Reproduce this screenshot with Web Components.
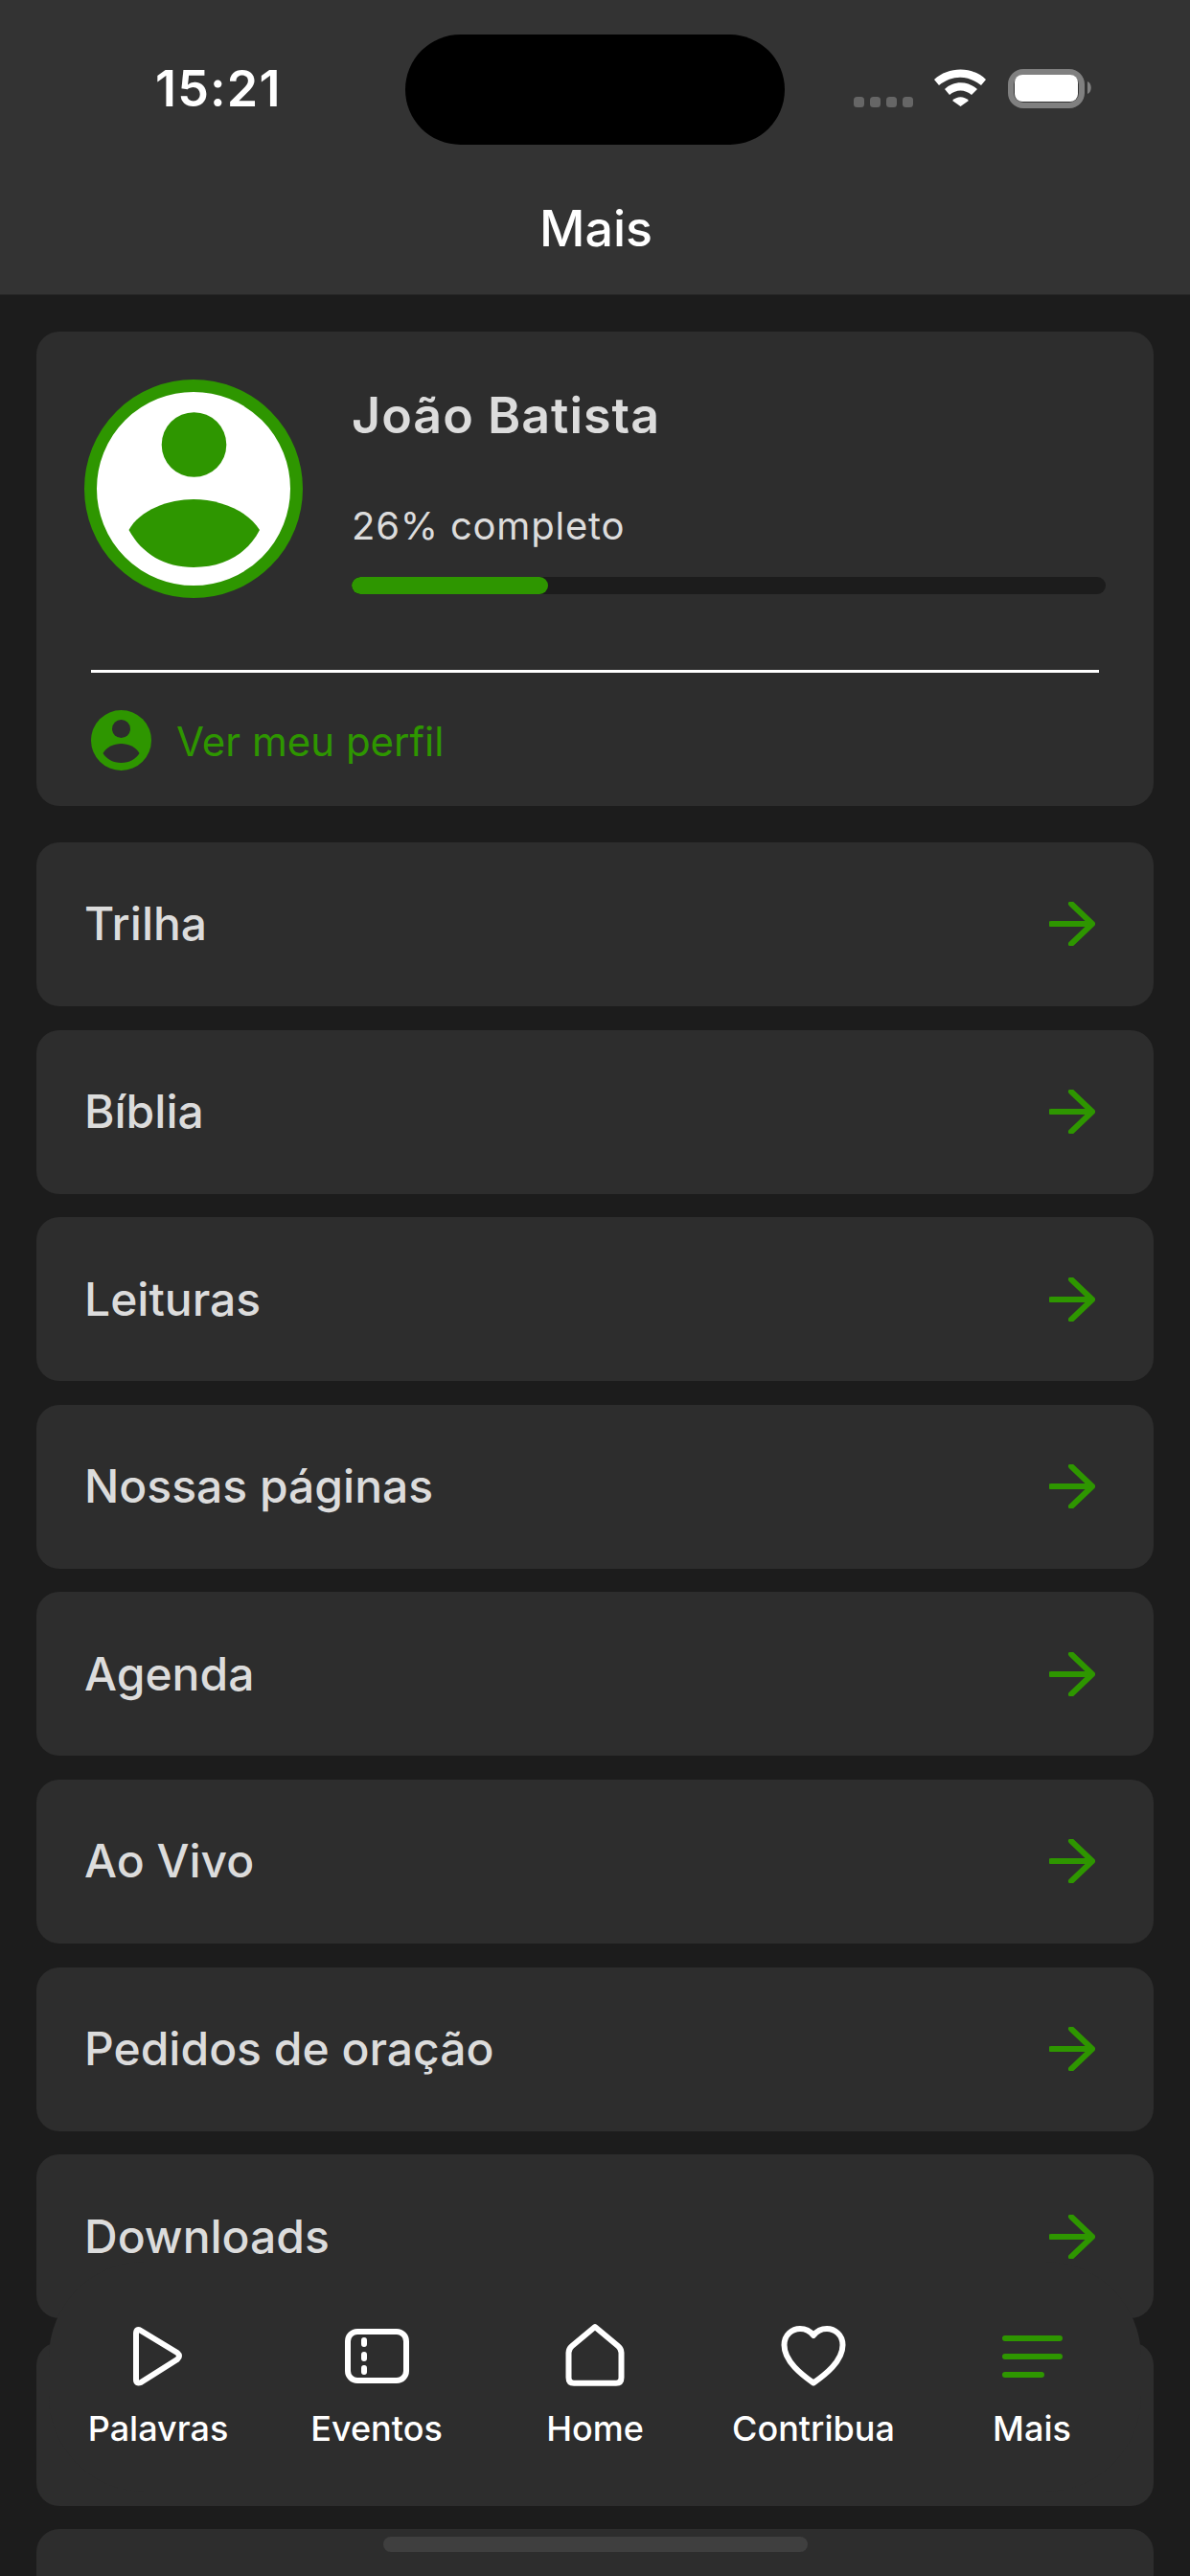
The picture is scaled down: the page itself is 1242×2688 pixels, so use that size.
<!doctype html>
<html><head><meta charset="utf-8"><style>
html,body{margin:0;padding:0;background:#1c1c1c;}
body{width:1242px;height:2688px;overflow:hidden;position:relative;font-family:Inter,"Noto Sans",sans-serif;}
</style></head><body>
<app-screen>
<top-bar slot="head" time="15:21" title="Mais"></top-bar>
<profile-card name="João Batista" percent="26" link="Ver meu perfil"></profile-card>
<menu-row>Trilha</menu-row>
<menu-row>Bíblia</menu-row>
<menu-row>Leituras</menu-row>
<menu-row>Nossas páginas</menu-row>
<menu-row>Agenda</menu-row>
<menu-row>Ao Vivo</menu-row>
<menu-row>Pedidos de oração</menu-row>
<menu-row>Downloads</menu-row>
<menu-row></menu-row>
<menu-row></menu-row>
<tab-bar slot="over"></tab-bar>
</app-screen>
<script>
const GREEN='#2e9600';
class AppScreen extends HTMLElement{constructor(){super();this.attachShadow({mode:'open'}).innerHTML=`<style>
:host{display:flex;flex-direction:column;width:1242px;height:2688px;overflow:hidden;position:relative}
main{flex:none;display:flex;flex-direction:column;gap:24.6px;padding:38px 38px 0}
.home{position:absolute;left:400px;top:2647px;width:443px;height:16px;border-radius:8px;background:#3f3f3f}
</style><slot name="head"></slot><main><slot></slot></main><slot name="over"></slot><div class="home"></div>`;}}
class TopBar extends HTMLElement{constructor(){super();this.attachShadow({mode:'open'}).innerHTML=`<style>
:host{display:block;flex:none;height:308px;background:#333;color:#fff;position:relative;box-sizing:border-box;border-bottom:1px solid #252525}
.time{position:absolute;left:162px;top:66px;font:600 52px/54px Inter,"Liberation Sans",sans-serif;letter-spacing:1.2px}
.island{position:absolute;left:423px;top:36px;width:396px;height:115px;border-radius:58px;background:#000}
.title{position:absolute;left:2px;right:0;top:212px;text-align:center;font:500 52px/54px Inter,"Liberation Sans",sans-serif}
svg{position:absolute;left:880px;top:60px}
</style><div class="time">${this.getAttribute('time')}</div><div class="island"></div>
<svg width="270" height="60" viewBox="0 0 270 60">
<g fill="#666"><rect x="11" y="41" width="11" height="11" rx="3.5"/><rect x="28" y="41" width="11" height="11" rx="3.5"/><rect x="45" y="41" width="11" height="11" rx="3.5"/><rect x="62" y="41" width="11" height="11" rx="3.5"/></g>
<g fill="#fff"><path d="M95 23C110 9 135 9 149 23L144 29C130 18 114 18 100 29Z"/><path d="M106 33C115 24 130 24 140 33L134 39C127 33 118 33 111 39Z"/><path d="M114 45C119 40 126 40 131 45L122.500 51Z"/></g>
<rect x="175" y="15" width="74" height="35" rx="13" fill="none" stroke="#808080" stroke-width="6"/>
<rect x="179" y="18" width="66" height="28" rx="8" fill="#fff"/>
<path d="M255 25C260 27 260 36 255 38Z" fill="#808080"/>
</svg>
<div class="title">${this.getAttribute('title')}</div>`;}}
class ProfileCard extends HTMLElement{constructor(){super();const p=this.getAttribute('percent');this.attachShadow({mode:'open'}).innerHTML=`<style>
:host{display:block;flex:none;height:495px;box-sizing:border-box;background:#2d2d2d;border-radius:24px;padding:50px 50px 0 50px;margin-bottom:13.4px}
.top{display:flex;gap:51px;height:303px}
.av{flex:none;width:228px;height:228px;display:block}
.info{flex:1;display:flex;flex-direction:column}
.name{font:600 52px/60px Inter,sans-serif;color:#dcdcdc;margin-top:8px;letter-spacing:1px}
.pct{font:400 40px/48px Inter,sans-serif;color:#dcdcdc;margin-top:61px;letter-spacing:.8px}
.bar{height:18px;border-radius:9px;background:#1c1c1c;margin-top:29px;overflow:hidden}
.fill{height:100%;width:${p}%;background:${GREEN};border-radius:9px}
hr{border:0;height:3px;background:#fff;margin:0 7px}
.link{display:flex;align-items:center;gap:26px;margin:38px 7px 0;color:${GREEN};font:400 42px/63px Inter,sans-serif}
.link svg{flex:none}
.link span{padding-top:2px}
</style><div class="top">
<svg class="av" viewBox="0 0 228 228"><circle cx="114" cy="114" r="107.500" fill="#fff" stroke="${GREEN}" stroke-width="13"/><circle cx="114.500" cy="68" r="33.800" fill="${GREEN}"/><path d="M46.500 157C58 136 88 125 114 125C140 125 170 136 183 157C170 182 146 196 114 196C84 196 60 182 46.500 157Z" fill="${GREEN}"/></svg>
<div class="info"><div class="name">${this.getAttribute('name')}</div><div class="pct">${p}% completo</div><div class="bar"><div class="fill"></div></div></div></div>
<hr><div class="link"><svg width="63" height="63" viewBox="0 0 63 63"><circle cx="31.500" cy="31.500" r="31.500" fill="${GREEN}"/><circle cx="31.500" cy="19.500" r="9.500" fill="#2d2d2d"/><path d="M12.500 45C16 38.500 24 35 31.500 35C39 35 47 38.500 50.500 45C47 51 40 55 31.500 55C23 55 16 51 12.500 45Z" fill="#2d2d2d"/></svg><span>${this.getAttribute('link')}</span></div>`;}}
class MenuRow extends HTMLElement{constructor(){super();this.attachShadow({mode:'open'}).innerHTML=`<style>
:host{display:flex;flex:none;align-items:center;justify-content:space-between;height:171px;box-sizing:border-box;background:#2d2d2d;border-radius:24px;padding:0 61px 0 50px;color:#dcdcdc;font:500 48px/56px Inter,sans-serif}
svg{flex:none}
</style><span><slot></slot></span><svg width="48" height="46" viewBox="0 0 48 46" fill="none" stroke="${GREEN}" stroke-width="6" stroke-linecap="round" stroke-linejoin="round"><path d="M2 23H45M23 2L45 23L23 44"/></svg>`;}}
class TabBar extends HTMLElement{constructor(){super();
const items=[['Palavras',`<path d="M17 15Q17 9 22 12L60 35Q64 38.500 60 42L22 66Q17 68 17 63Z"/>`,'#fff'],
['Eventos',`<rect x="10" y="13" width="61" height="51" rx="10"/><path d="M27 22V26M27 37V41M27 51V55"/>`,'#fff'],
['Home',`<path d="M40 8L64 28Q67.500 31 67.500 35V61Q67.500 66.700 62 66.700H18Q12.500 66.700 12.500 61V35Q12.500 31 16 28Z"/>`,'#fff'],
['Contribua',`<path d="M40 66.500C28 58 9.500 44 9.500 27C9.500 16 18 10 26 10C32 10 37 13 40 17C43 13 48 10 54 10C62 10 70.500 16 70.500 27C70.500 44 52 58 40 66.500Z"/>`,'#fff'],
['Mais',`<path d="M12 20H69M12 39H69M12 58H50" stroke="${GREEN}"/>`,GREEN]];
this.attachShadow({mode:'open'}).innerHTML=`<style>
:host{position:absolute;left:51px;top:2360px;width:1140px;height:240px;background:#2d2d2d;border-radius:100px;display:grid;grid-template-columns:repeat(5,1fr);box-sizing:border-box}
.t{display:flex;flex-direction:column;align-items:center;padding-top:60px;color:#fff;font:500 36px/44px Inter,sans-serif}
svg{display:block;margin-bottom:12px}
</style>${items.map(([l,d,c])=>`<div class="t"><svg width="80" height="80" viewBox="0 0 80 80" fill="none" stroke="${c}" stroke-width="6" stroke-linecap="round" stroke-linejoin="round">${d}</svg><span>${l}</span></div>`).join('')}`;}}
customElements.define('app-screen',AppScreen);
customElements.define('top-bar',TopBar);
customElements.define('profile-card',ProfileCard);
customElements.define('menu-row',MenuRow);
customElements.define('tab-bar',TabBar);
</script>
</body></html>
